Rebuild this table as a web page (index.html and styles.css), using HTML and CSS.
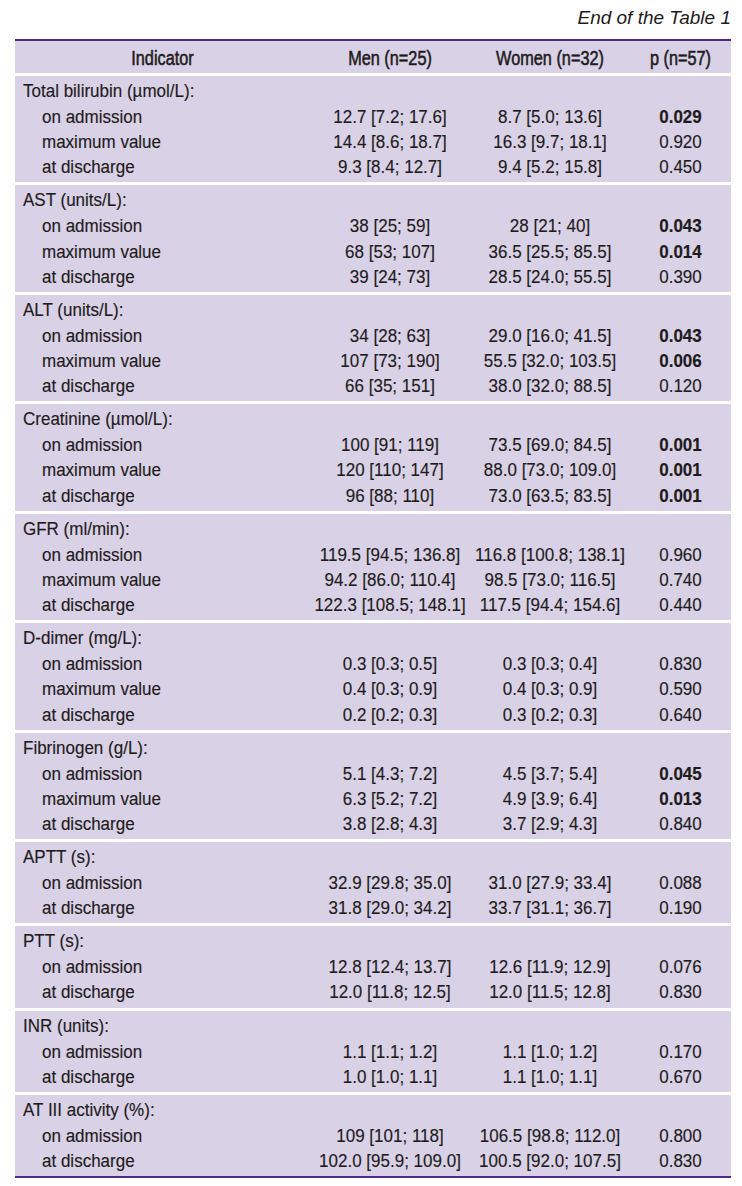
FILE: index.html
```html
<!DOCTYPE html>
<html lang="en">
<head>
<meta charset="utf-8">
<title>End of the Table 1</title>
<link rel="stylesheet" href="styles.css">
</head>
<body>
<div class="page">
  <div class="caption">End of the Table 1</div>
  <div class="table">
    <div class="row head">
      <span class="cell">Indicator</span>
      <span class="cell">Men (n=25)</span>
      <span class="cell">Women (n=32)</span>
      <span class="cell">p (n=57)</span>
    </div>

    <div class="group">
      <div class="row title"><span class="label">Total bilirubin (µmol/L):</span></div>
      <div class="row"><span class="label sub">on admission</span><span class="cell">12.7 [7.2; 17.6]</span><span class="cell">8.7 [5.0; 13.6]</span><span class="cell b">0.029</span></div>
      <div class="row"><span class="label sub">maximum value</span><span class="cell">14.4 [8.6; 18.7]</span><span class="cell">16.3 [9.7; 18.1]</span><span class="cell">0.920</span></div>
      <div class="row"><span class="label sub">at discharge</span><span class="cell">9.3 [8.4; 12.7]</span><span class="cell">9.4 [5.2; 15.8]</span><span class="cell">0.450</span></div>
    </div>

    <div class="group">
      <div class="row title"><span class="label">AST (units/L):</span></div>
      <div class="row"><span class="label sub">on admission</span><span class="cell">38 [25; 59]</span><span class="cell">28 [21; 40]</span><span class="cell b">0.043</span></div>
      <div class="row"><span class="label sub">maximum value</span><span class="cell">68 [53; 107]</span><span class="cell">36.5 [25.5; 85.5]</span><span class="cell b">0.014</span></div>
      <div class="row"><span class="label sub">at discharge</span><span class="cell">39 [24; 73]</span><span class="cell">28.5 [24.0; 55.5]</span><span class="cell">0.390</span></div>
    </div>

    <div class="group">
      <div class="row title"><span class="label">ALT (units/L):</span></div>
      <div class="row"><span class="label sub">on admission</span><span class="cell">34 [28; 63]</span><span class="cell">29.0 [16.0; 41.5]</span><span class="cell b">0.043</span></div>
      <div class="row"><span class="label sub">maximum value</span><span class="cell">107 [73; 190]</span><span class="cell">55.5 [32.0; 103.5]</span><span class="cell b">0.006</span></div>
      <div class="row"><span class="label sub">at discharge</span><span class="cell">66 [35; 151]</span><span class="cell">38.0 [32.0; 88.5]</span><span class="cell">0.120</span></div>
    </div>

    <div class="group">
      <div class="row title"><span class="label">Creatinine (µmol/L):</span></div>
      <div class="row"><span class="label sub">on admission</span><span class="cell">100 [91; 119]</span><span class="cell">73.5 [69.0; 84.5]</span><span class="cell b">0.001</span></div>
      <div class="row"><span class="label sub">maximum value</span><span class="cell">120 [110; 147]</span><span class="cell">88.0 [73.0; 109.0]</span><span class="cell b">0.001</span></div>
      <div class="row"><span class="label sub">at discharge</span><span class="cell">96 [88; 110]</span><span class="cell">73.0 [63.5; 83.5]</span><span class="cell b">0.001</span></div>
    </div>

    <div class="group">
      <div class="row title"><span class="label">GFR (ml/min):</span></div>
      <div class="row"><span class="label sub">on admission</span><span class="cell">119.5 [94.5; 136.8]</span><span class="cell">116.8 [100.8; 138.1]</span><span class="cell">0.960</span></div>
      <div class="row"><span class="label sub">maximum value</span><span class="cell">94.2 [86.0; 110.4]</span><span class="cell">98.5 [73.0; 116.5]</span><span class="cell">0.740</span></div>
      <div class="row"><span class="label sub">at discharge</span><span class="cell">122.3 [108.5; 148.1]</span><span class="cell">117.5 [94.4; 154.6]</span><span class="cell">0.440</span></div>
    </div>

    <div class="group">
      <div class="row title"><span class="label">D-dimer (mg/L):</span></div>
      <div class="row"><span class="label sub">on admission</span><span class="cell">0.3 [0.3; 0.5]</span><span class="cell">0.3 [0.3; 0.4]</span><span class="cell">0.830</span></div>
      <div class="row"><span class="label sub">maximum value</span><span class="cell">0.4 [0.3; 0.9]</span><span class="cell">0.4 [0.3; 0.9]</span><span class="cell">0.590</span></div>
      <div class="row"><span class="label sub">at discharge</span><span class="cell">0.2 [0.2; 0.3]</span><span class="cell">0.3 [0.2; 0.3]</span><span class="cell">0.640</span></div>
    </div>

    <div class="group">
      <div class="row title"><span class="label">Fibrinogen (g/L):</span></div>
      <div class="row"><span class="label sub">on admission</span><span class="cell">5.1 [4.3; 7.2]</span><span class="cell">4.5 [3.7; 5.4]</span><span class="cell b">0.045</span></div>
      <div class="row"><span class="label sub">maximum value</span><span class="cell">6.3 [5.2; 7.2]</span><span class="cell">4.9 [3.9; 6.4]</span><span class="cell b">0.013</span></div>
      <div class="row"><span class="label sub">at discharge</span><span class="cell">3.8 [2.8; 4.3]</span><span class="cell">3.7 [2.9; 4.3]</span><span class="cell">0.840</span></div>
    </div>

    <div class="group">
      <div class="row title"><span class="label">APTT (s):</span></div>
      <div class="row"><span class="label sub">on admission</span><span class="cell">32.9 [29.8; 35.0]</span><span class="cell">31.0 [27.9; 33.4]</span><span class="cell">0.088</span></div>
      <div class="row"><span class="label sub">at discharge</span><span class="cell">31.8 [29.0; 34.2]</span><span class="cell">33.7 [31.1; 36.7]</span><span class="cell">0.190</span></div>
    </div>

    <div class="group">
      <div class="row title"><span class="label">PTT (s):</span></div>
      <div class="row"><span class="label sub">on admission</span><span class="cell">12.8 [12.4; 13.7]</span><span class="cell">12.6 [11.9; 12.9]</span><span class="cell">0.076</span></div>
      <div class="row"><span class="label sub">at discharge</span><span class="cell">12.0 [11.8; 12.5]</span><span class="cell">12.0 [11.5; 12.8]</span><span class="cell">0.830</span></div>
    </div>

    <div class="group">
      <div class="row title"><span class="label">INR (units):</span></div>
      <div class="row"><span class="label sub">on admission</span><span class="cell">1.1 [1.1; 1.2]</span><span class="cell">1.1 [1.0; 1.2]</span><span class="cell">0.170</span></div>
      <div class="row"><span class="label sub">at discharge</span><span class="cell">1.0 [1.0; 1.1]</span><span class="cell">1.1 [1.0; 1.1]</span><span class="cell">0.670</span></div>
    </div>

    <div class="group">
      <div class="row title"><span class="label">AT III activity (%):</span></div>
      <div class="row"><span class="label sub">on admission</span><span class="cell">109 [101; 118]</span><span class="cell">106.5 [98.8; 112.0]</span><span class="cell">0.800</span></div>
      <div class="row"><span class="label sub">at discharge</span><span class="cell">102.0 [95.9; 109.0]</span><span class="cell">100.5 [92.0; 107.5]</span><span class="cell">0.830</span></div>
    </div>
  </div>
</div>
</body>
</html>
```

FILE: styles.css
```css
html, body {
  margin: 0;
  padding: 0;
  background: #ffffff;
}

body {
  font-family: "Liberation Sans", Arial, sans-serif;
  color: #1f1b1c;
}

.page {
  width: 742px;
  padding: 0 11px 0 15px;
  box-sizing: border-box;
}

.caption {
  height: 39px;
  line-height: 36px;
  text-align: right;
  font-style: italic;
  font-size: 19px;
}

.table {
  display: flex;
  flex-direction: column;
  gap: 3px;
  border-top: 2px solid #4e2a84;
  border-bottom: 2px solid #4e2a84;
  background: #ffffff;
}

.row {
  display: grid;
  grid-template-columns: 295px 160px 160px 101px;
  align-items: center;
  height: 25.2px;
  font-size: 17px;
  white-space: nowrap;
}

.row > span {
  transform: scaleY(1.1);
  -webkit-text-stroke: 0.15px currentColor;
}

.head {
  height: 32px;
  background: #d9d2e6;
  font-size: 16.3px;
}

.head > span {
  transform: scaleY(1.28);
  -webkit-text-stroke: 0.45px currentColor;
}

.group {
  background: #d9d2e6;
  padding: 1.7px 0 2.5px;
}

.title {
  height: 26.7px;
}

.cell {
  text-align: center;
}

.label {
  padding-left: 8px;
}

.label.sub {
  padding-left: 27px;
}

.b {
  font-weight: bold;
}
```
